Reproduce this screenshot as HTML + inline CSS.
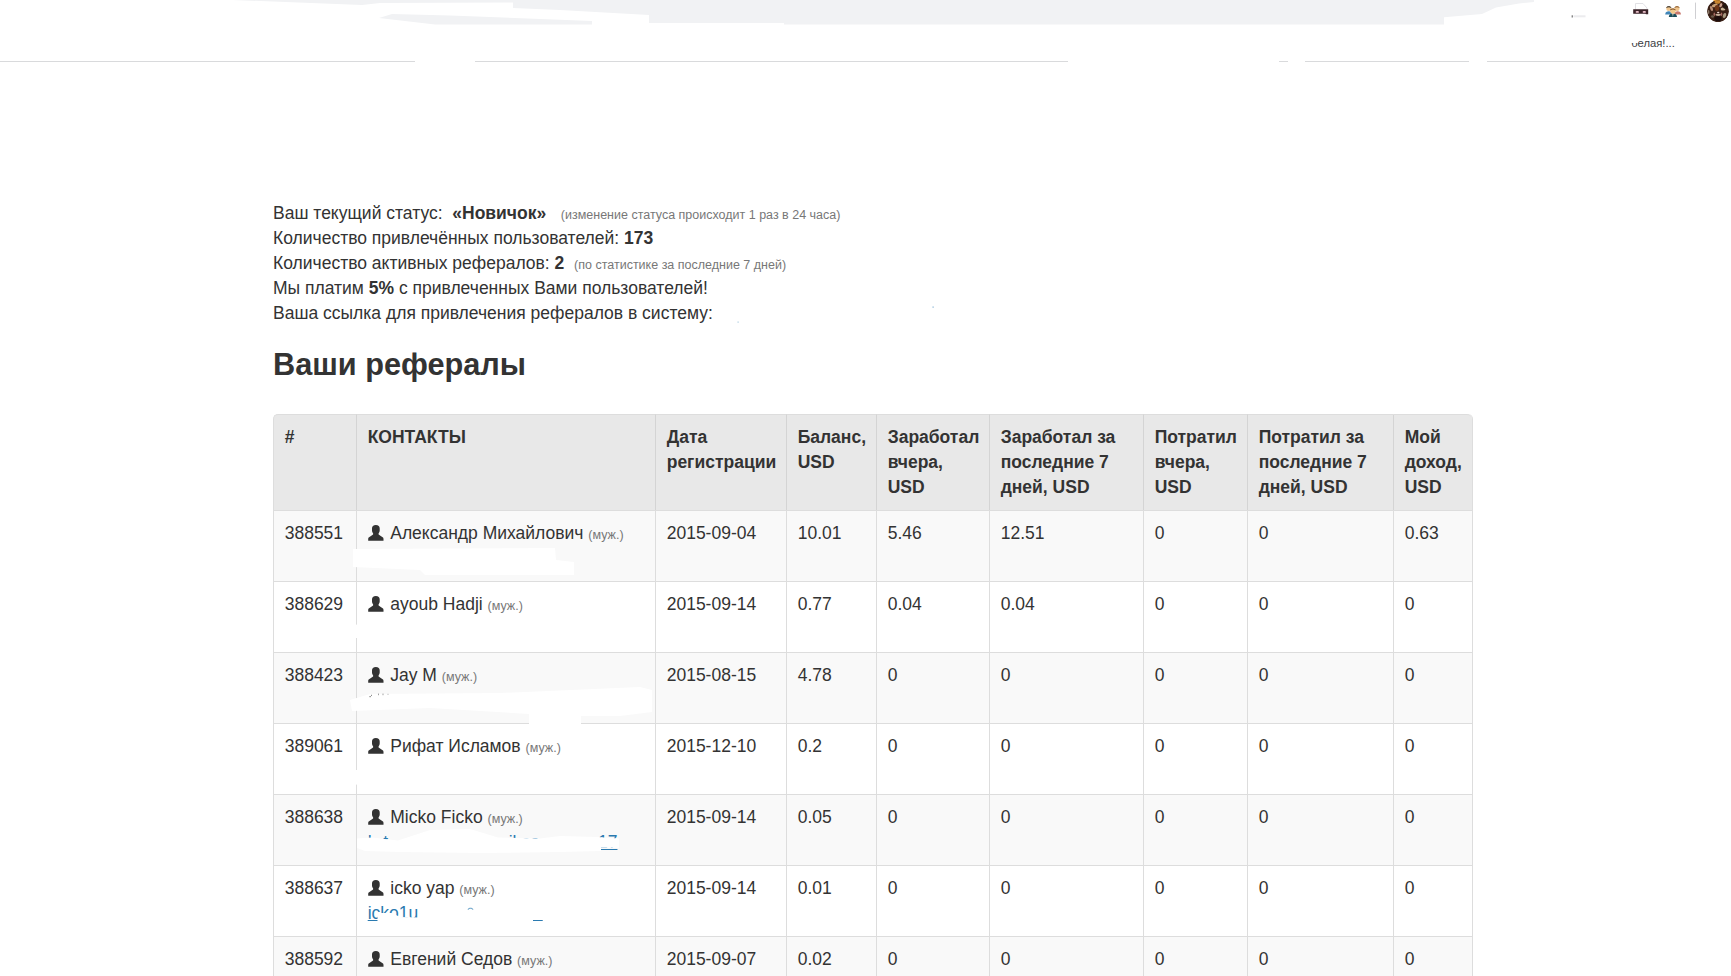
<!DOCTYPE html>
<html lang="ru">
<head>
<meta charset="utf-8">
<title>Ваши рефералы</title>
<style>
*{box-sizing:border-box;}
html,body{margin:0;padding:0;}
body{width:1731px;height:976px;overflow:hidden;background:#fff;position:relative;
 font-family:"Liberation Sans",Arial,Helvetica,sans-serif;font-size:17.5px;line-height:25px;color:#333;}
#chrome{position:absolute;left:0;top:0;width:1731px;height:70px;}
#chrome svg{position:absolute;left:0;top:0;}
#bm{position:absolute;left:1631.2px;top:35px;font-size:11.25px;line-height:16px;color:#3c4043;white-space:nowrap;}
#bmw{position:absolute;left:1628px;top:33px;width:9.7px;height:10.2px;background:#fff;}
#info{position:absolute;left:273px;top:201px;white-space:nowrap;}
#info div{height:25px;}
#info small{font-size:12.5px;color:#777;}
#info b{font-weight:bold;}
h3{position:absolute;left:273px;top:347px;margin:0;font-size:30.7px;line-height:36px;font-weight:bold;color:#333;white-space:nowrap;}
table{position:absolute;left:273px;top:414px;width:1200px;table-layout:fixed;border-collapse:separate;border-spacing:0;
 border-right:1px solid #ddd;border-radius:5px 5px 0 0;}
th,td{border-left:1px solid #ddd;border-top:1px solid #ddd;padding:10px 9px 10px 10.7px;vertical-align:top;text-align:left;
 overflow:hidden;}
th{background:#e8e8e8;font-weight:bold;height:96px;border-left-color:#d4d4d4;}
th:first-child{border-left-color:#ddd;}
th:first-child{border-top-left-radius:5px;}
th:last-child{border-top-right-radius:5px;}
td{height:71px;white-space:nowrap;}
tbody tr:nth-child(odd) td{background:#f9f9f9;}
td small{font-size:12.5px;color:#777;}
.u{display:inline-block;width:16px;height:16px;vertical-align:-2px;margin-left:0.5px;margin-right:1.2px;}
.em{position:absolute;white-space:nowrap;height:25px;}
#ov{position:absolute;left:0;top:0;pointer-events:none;}
a{color:#2a7ab0;text-decoration:underline;}
</style>
</head>
<body>
<div id="chrome">
<svg width="1731" height="70" viewBox="0 0 1731 70">
 <defs>
  <clipPath id="avc"><circle cx="1718" cy="11.2" r="10.9"/></clipPath>
  <filter id="bl" x="-20%" y="-20%" width="140%" height="140%"><feGaussianBlur stdDeviation="0.7"/></filter>
  <filter id="bl2" x="-20%" y="-20%" width="140%" height="140%"><feGaussianBlur stdDeviation="0.45"/></filter>
 </defs>
 <!-- browser toolbar strip, partly whited out -->
 <path fill="#f1f2f4" d="M232 0 L362 5 L380 3 L513 2.500 L513 8 L560 10 L649 15 L649 23 L784 23 L784 24.500 L1444 24.500 L1444 17.300 L1482 13.900 L1496 7.500 L1519 3.500 L1534 2 L1534 0 Z"/>
 <path fill="#f1f2f4" d="M379 18 L392 14 L450 15.500 L592 21 L592 24.500 L435 24.500 Z"/>
 <!-- bookmark bar bottom line with erased gaps -->
 <g fill="#d9dadc">
  <rect x="0" y="61" width="415" height="1"/>
  <rect x="475" y="61" width="593" height="1"/>
  <rect x="1279" y="61" width="9" height="1"/>
  <rect x="1305" y="61" width="164" height="1"/>
  <rect x="1487" y="61" width="244" height="1"/>
 </g>
 <!-- leftover marks -->
 <rect x="1571.700" y="15.300" width="1" height="2.200" fill="#555"/>
 <rect x="1573.500" y="15.300" width="12" height="2" fill="#ececee"/>
 <!-- extension icon 1 : page with mask -->
 <path d="M1635.500 9 V3.500 H1643 L1647 8 V9" fill="none" stroke="#dedee2" stroke-width="0.9"/>
 <path d="M1633.200 9.200 H1648.200 V14.300 H1646 L1645.500 13.800 H1633.200 Z" fill="#3a2228"/>
 <ellipse cx="1637.300" cy="11.900" rx="1.700" ry="0.950" fill="#f3c9d3"/>
 <ellipse cx="1644.300" cy="11.900" rx="1.700" ry="0.950" fill="#f3c9d3"/>
 <!-- extension icon 2 : group of users -->
 <g filter="url(#bl2)">
  <path d="M1665.200 14.500 C1665.200 12.300 1666.800 11.300 1668.800 11.300 C1670.800 11.300 1672 12.500 1672 14.500 Z" fill="#3f86b8"/>
  <circle cx="1668.800" cy="8.600" r="2.500" fill="#f0c58c"/>
  <path d="M1666.200 8 C1666.200 5.800 1671.400 5.800 1671.400 8 C1670 7 1667.600 7 1666.200 8 Z" fill="#2b2b2b"/>
  <path d="M1674.500 14.500 C1674.500 12.300 1675.800 11.300 1677.600 11.300 C1679.600 11.300 1680.900 12.300 1680.900 14.500 Z" fill="#c8786c"/>
  <circle cx="1677" cy="8.600" r="2.500" fill="#f0c58c"/>
  <path d="M1674.400 8 C1674.400 5.800 1679.600 5.800 1679.600 8 C1678.200 7 1675.800 7 1674.400 8 Z" fill="#8a5a2e"/>
  <path d="M1668.800 17 C1668.800 14.300 1670.600 13.400 1672.900 13.400 C1675.200 13.400 1677 14.300 1677 17 Z" fill="#1f4f5c"/>
  <circle cx="1672.900" cy="11" r="2.700" fill="#f2c88a"/>
  <path d="M1670.100 10.400 C1670.100 7.900 1675.700 7.900 1675.700 10.400 C1674.200 9.300 1671.600 9.300 1670.100 10.400 Z" fill="#7a4a22"/>
  <path d="M1672.300 13.400 L1672.900 16.800 L1673.500 13.400 Z" fill="#f2e2c8"/>
 </g>
 <!-- separator -->
 <rect x="1695" y="2.600" width="1" height="16.300" fill="#cfcfd2"/>
 <!-- avatar -->
 <path d="M1713.500 0 H1720 V2.500 H1713.500 Z" fill="#f3a83a" filter="url(#bl2)"/>
 <g clip-path="url(#avc)">
  <circle cx="1718" cy="11.200" r="11" fill="#3a2016"/>
  <g filter="url(#bl)">
   <ellipse cx="1717.500" cy="2" rx="3" ry="1.800" fill="#c8842e"/>
   <ellipse cx="1714.800" cy="5.500" rx="3" ry="1.600" fill="#c9a074" transform="rotate(-15 1714.800 5.500)"/>
   <ellipse cx="1711.500" cy="8.500" rx="1.300" ry="2.600" fill="#b98f78" transform="rotate(-20 1711.500 8.500)"/>
   <ellipse cx="1720.800" cy="5.200" rx="1.300" ry="2.200" fill="#c9a08c" transform="rotate(25 1720.800 5.200)"/>
   <ellipse cx="1723" cy="9" rx="2.400" ry="1.500" fill="#c8b394"/>
   <ellipse cx="1717" cy="8" rx="2.200" ry="3" fill="#6e3418"/>
   <ellipse cx="1718.200" cy="12.500" rx="1.200" ry="0.800" fill="#e8d3cc"/>
   <ellipse cx="1718.200" cy="14.800" rx="2.800" ry="1.100" fill="#c4ad98"/>
   <ellipse cx="1714.300" cy="14.200" rx="0.800" ry="1.800" fill="#a86a62"/>
   <ellipse cx="1721.500" cy="14.200" rx="0.800" ry="1.800" fill="#a86a62"/>
   <ellipse cx="1718" cy="18.500" rx="3.800" ry="2.600" fill="#1f0f0c"/>
   <ellipse cx="1712.500" cy="16.500" rx="1.600" ry="1.200" fill="#6a5a4a"/>
   <ellipse cx="1724.500" cy="15.500" rx="1.600" ry="2.600" fill="#a89880" transform="rotate(20 1724.500 15.500)"/>
   <ellipse cx="1708.500" cy="12" rx="1" ry="2" fill="#8a7868"/>
   <ellipse cx="1725.500" cy="6" rx="2.500" ry="3" fill="#24120e"/>
  </g>
 </g>
</svg>
<div id="bm">белая!...</div><div id="bmw"></div>
</div>

<div id="info">
<div>Ваш текущий статус: &nbsp;<b>«Новичок»</b> &nbsp;&nbsp;<small>(изменение статуса происходит 1 раз в 24 часа)</small></div>
<div>Количество привлечённых пользователей: <b>173</b></div>
<div>Количество активных рефералов: <b>2</b> &nbsp;<small>(по статистике за последние 7 дней)</small></div>
<div>Мы платим <b>5%</b> с привлеченных Вами пользователей!</div>
<div>Ваша ссылка для привлечения рефералов в систему:</div>
</div>

<h3>Ваши рефералы</h3>

<table>
<colgroup><col style="width:83px"><col style="width:299px"><col style="width:131px"><col style="width:90px"><col style="width:113px"><col style="width:154px"><col style="width:104px"><col style="width:146px"><col style="width:79px"></colgroup>
<thead><tr>
<th>#</th><th>КОНТАКТЫ</th><th>Дата регистрации</th><th>Баланс, USD</th><th>Заработал вчера, USD</th><th>Заработал за последние 7 дней, USD</th><th>Потратил вчера, USD</th><th>Потратил за последние 7 дней, USD</th><th>Мой доход, USD</th>
</tr></thead>
<tbody>
<tr><td>388551</td><td><svg class="u" viewBox="0 0 16 16"><use href="#usr"/></svg> Александр Михайлович <small>(муж.)</small></td><td>2015-09-04</td><td>10.01</td><td>5.46</td><td>12.51</td><td>0</td><td>0</td><td>0.63</td></tr>
<tr><td>388629</td><td><svg class="u" viewBox="0 0 16 16"><use href="#usr"/></svg> ayoub Hadji <small>(муж.)</small></td><td>2015-09-14</td><td>0.77</td><td>0.04</td><td>0.04</td><td>0</td><td>0</td><td>0</td></tr>
<tr><td>388423</td><td><svg class="u" viewBox="0 0 16 16"><use href="#usr"/></svg> Jay M <small>(муж.)</small></td><td>2015-08-15</td><td>4.78</td><td>0</td><td>0</td><td>0</td><td>0</td><td>0</td></tr>
<tr><td>389061</td><td><svg class="u" viewBox="0 0 16 16"><use href="#usr"/></svg> Рифат Исламов <small>(муж.)</small></td><td>2015-12-10</td><td>0.2</td><td>0</td><td>0</td><td>0</td><td>0</td><td>0</td></tr>
<tr><td>388638</td><td><svg class="u" viewBox="0 0 16 16"><use href="#usr"/></svg> Micko Ficko <small>(муж.)</small></td><td>2015-09-14</td><td>0.05</td><td>0</td><td>0</td><td>0</td><td>0</td><td>0</td></tr>
<tr><td>388637</td><td><svg class="u" viewBox="0 0 16 16"><use href="#usr"/></svg> icko yap <small>(муж.)</small></td><td>2015-09-14</td><td>0.01</td><td>0</td><td>0</td><td>0</td><td>0</td><td>0</td></tr>
<tr><td>388592</td><td><svg class="u" viewBox="0 0 16 16"><use href="#usr"/></svg> Евгений Седов <small>(муж.)</small></td><td>2015-09-07</td><td>0.02</td><td>0</td><td>0</td><td>0</td><td>0</td><td>0</td></tr>
</tbody>
</table>


<!-- e-mail lines (mostly erased in the screenshot) -->
<div class="em" style="left:367.7px;top:830px;"><a>h·t</a></div>
<div class="em" style="left:499px;top:830px;"><a>ail.co</a></div>
<div class="em" style="left:598px;top:830px;"><a>17</a></div>
<div class="em" style="left:367.7px;top:901px;"><a>icko1u</a></div>
<div class="em" style="left:533px;top:901px;"><a>&nbsp;&nbsp;</a></div>
<svg id="ov" width="1731" height="976" viewBox="0 0 1731 976">
 <g fill="#fff">
  <path d="M353 549 L555 548 L556 560 L574 562 L574 575 L425 575 L420 570 L353 567 Z"/>
  <path d="M350 700 L370 694 L500 693 L640 687 L652 690 L652 712 L620 716 L581 716 L581 724 L529 724 L529 714 L430 708 L352 711 Z"/>
  <path d="M357 838.500 L372 837.500 L398 840.500 L430 830 L470 829 L498 837.500 L540 838.500 L560 836 L597 837 L619 838.500 L619 847.800 L601 847.800 L601 851 L560 852 L480 853 L400 852 L365 851 L357 848 Z"/>
  <path d="M377.500 913 L392 913 L400 917 L440 918 L460 908 L480 905 L500 910 L530 905 L620 900 L620 925 L543 925 L543 918 L533 918 L533 925 L377.500 925 Z"/>
 </g>
  <rect x="355" y="624.600" width="3" height="13.400" fill="#fff"/>
  <rect x="355" y="770" width="3" height="14.600" fill="#fff"/>
 <g fill="#777">
  <rect x="369.500" y="696" width="1.200" height="1.200"/>
  <rect x="371" y="694.800" width="1" height="1"/>
  <rect x="378" y="693.600" width="1" height="1.600" opacity="0.7"/>
  <rect x="382.500" y="693.600" width="1" height="1.600" opacity="0.7"/>
  <rect x="387.500" y="693.800" width="1" height="1" opacity="0.6"/>
 </g>
 <g fill="#2a7ab0">
  <rect x="932.500" y="306.500" width="1.200" height="1.200" opacity="0.6"/>
  <rect x="737.500" y="321.500" width="1.200" height="1.200" opacity="0.4"/>
  <path d="M467.500 909.500 C468.500 907.300 472.500 907.300 473.500 909.500 L472.500 909.800 C471.800 908.300 469.200 908.300 468.500 909.800 Z" opacity="0.7"/>
 </g>
</svg>
<svg width="0" height="0" style="position:absolute">
<defs>
<g id="usr"><path fill="#333" d="M7.85 0C10.4 0 11.7 1.3 11.7 3.4V5.600C11.700 6.900 11.200 7.600 10.600 8.300V9.400L14.600 12.200C15.300 12.700 15.500 13.100 15.500 13.900V15.800H0.200V13.900C0.200 13.100 0.400 12.700 1.100 12.200L5.100 9.400V8.300C4.500 7.600 4 6.900 4 5.600V3.400C4 1.300 5.300 0 7.850 0Z"/></g>
</defs>
</svg>
</body>
</html>
